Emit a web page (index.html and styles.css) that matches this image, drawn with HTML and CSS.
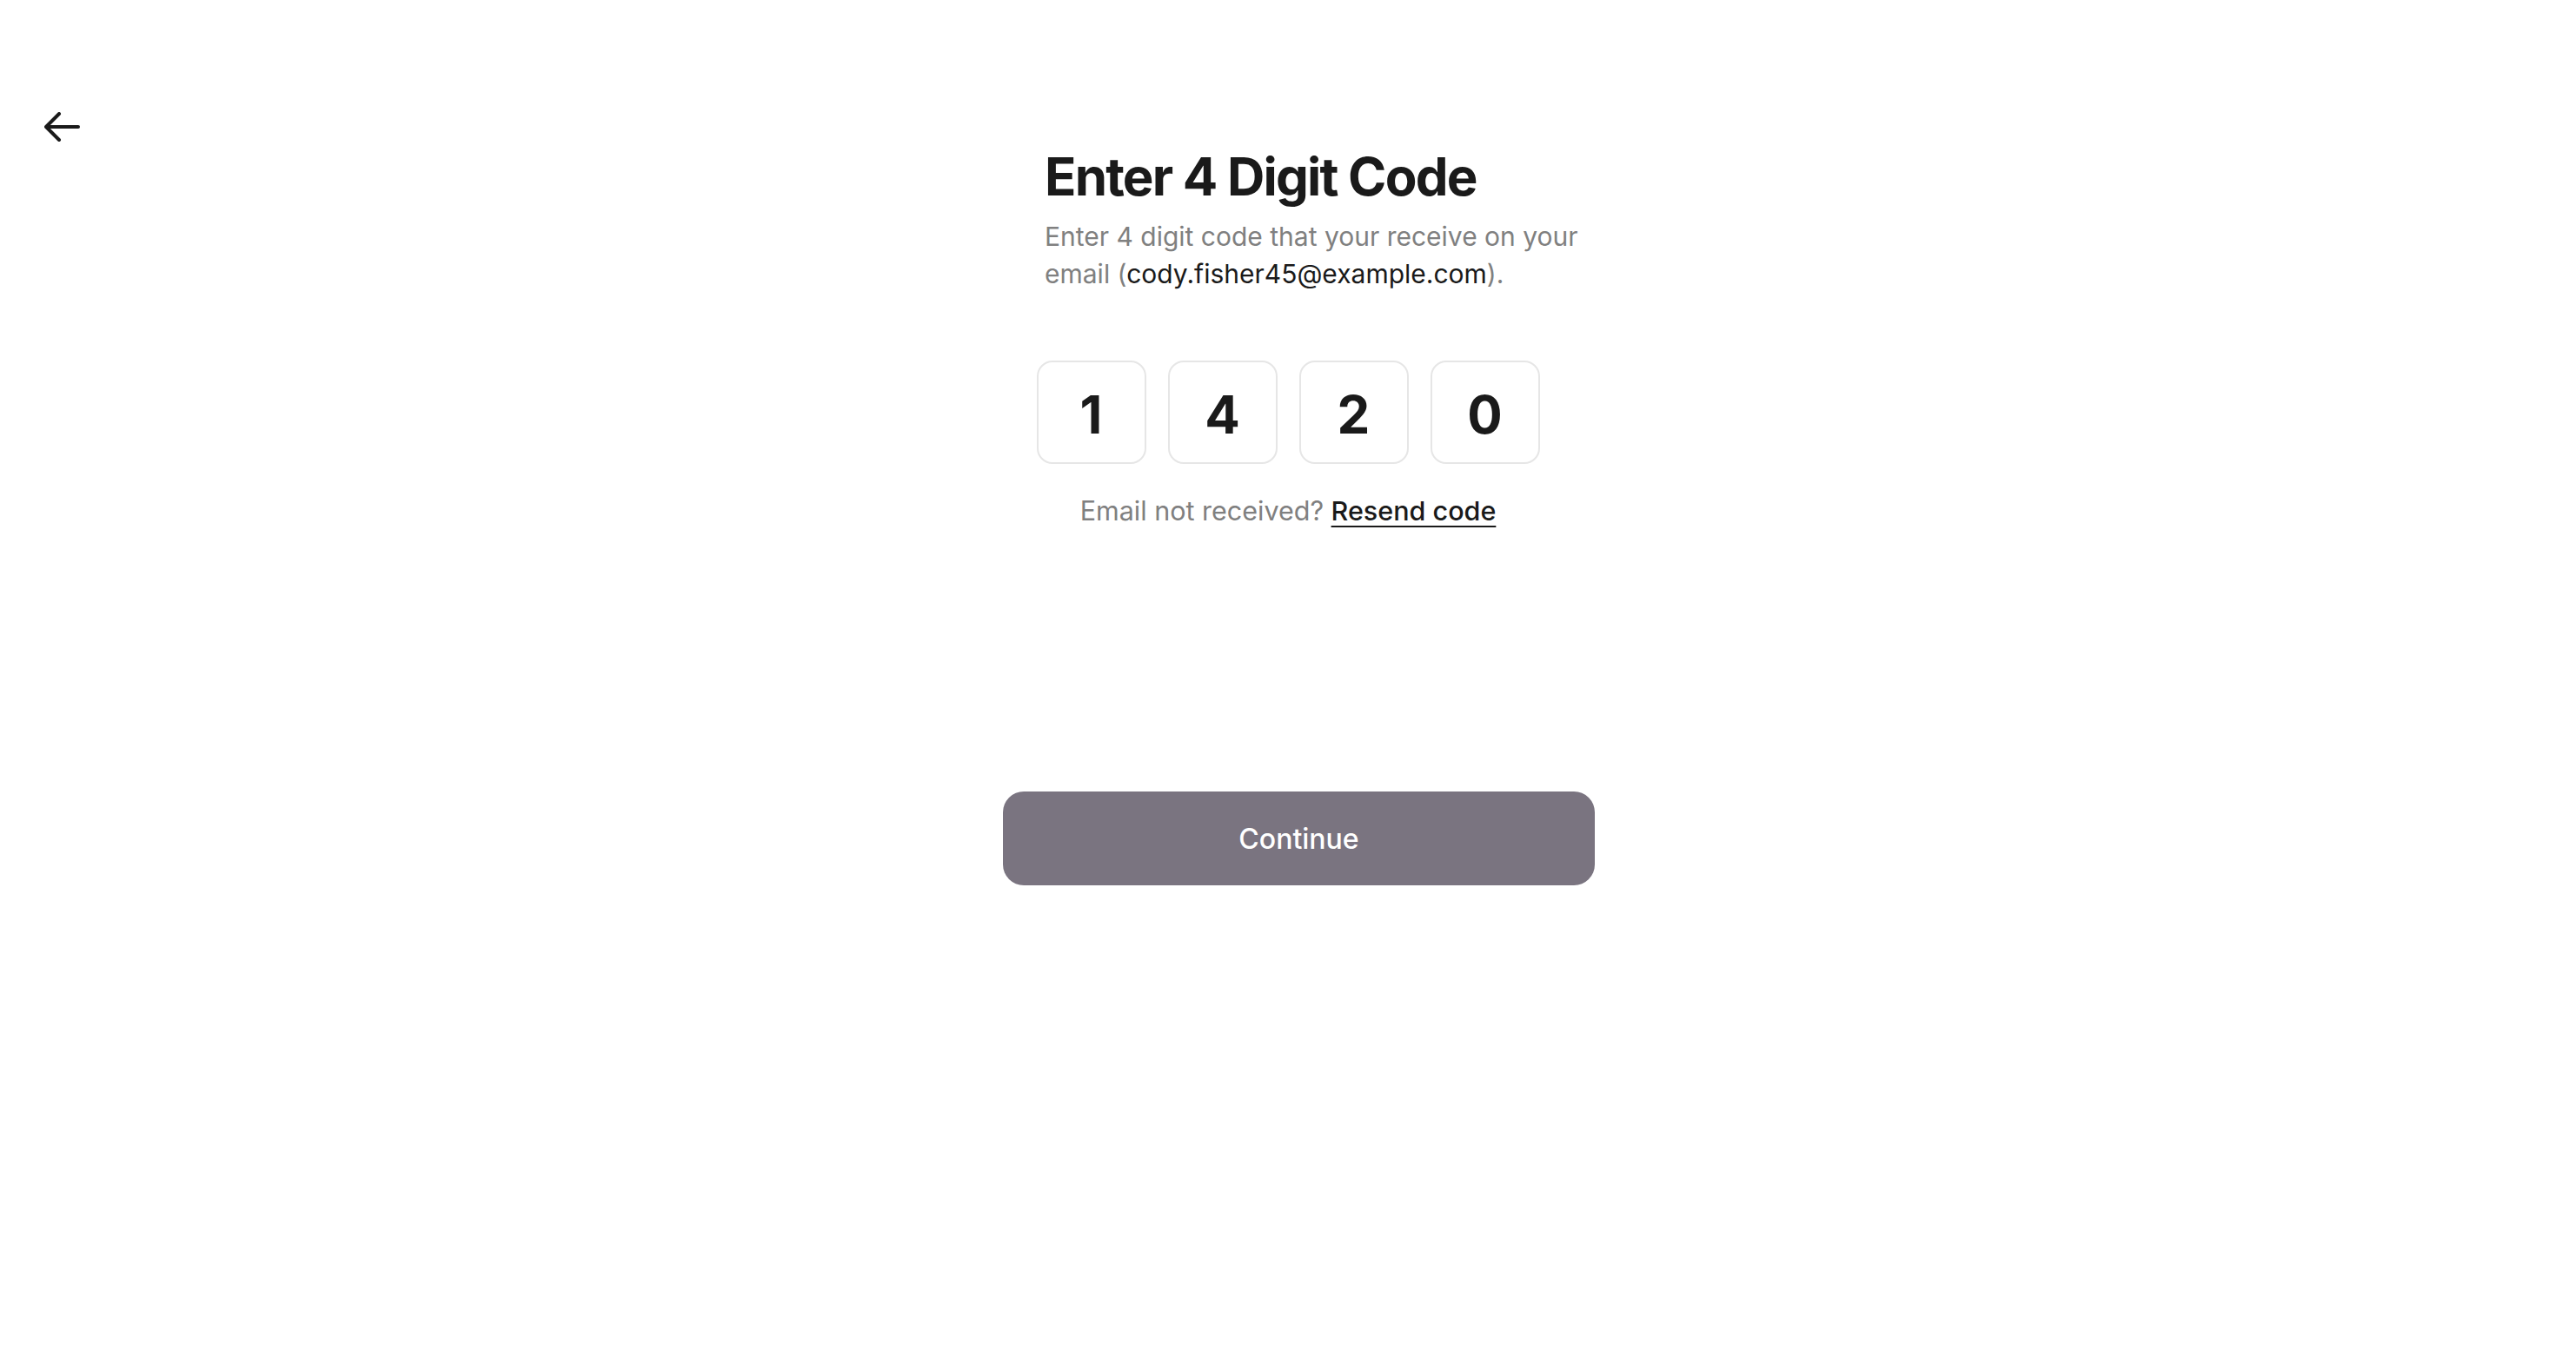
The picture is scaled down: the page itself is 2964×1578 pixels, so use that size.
FILE: index.html
```html
<!DOCTYPE html>
<html lang="en">
<head>
<meta charset="utf-8">
<title>Enter 4 Digit Code</title>
<link rel="stylesheet" href="styles.css">
</head>
<body>
<header class="topbar">
  <button class="back" aria-label="Back">
    <svg width="41" height="34" viewBox="0 0 41 34" fill="none" stroke="#1a1a1a" stroke-width="4" stroke-linecap="round" stroke-linejoin="round">
      <path d="M39 17H3"/>
      <path d="M17 2L2 17L17 32"/>
    </svg>
  </button>
</header>
<main class="verify">
  <div class="col">
    <div class="intro">
      <h1 class="title">Enter 4 Digit Code</h1>
      <p class="lead">Enter 4 digit code that your receive on your email (<span class="email">cody.fisher45@example.com</span>).</p>
    </div>
    <div class="otp">
      <div class="digit">1</div>
      <div class="digit">4</div>
      <div class="digit">2</div>
      <div class="digit">0</div>
    </div>
    <p class="resend">Email not received? <a class="resend-link" href="#">Resend code</a></p>
    <button class="continue">Continue</button>
  </div>
</main>
</body>
</html>
```

FILE: styles.css
```css
* { box-sizing: border-box; }
html, body { margin: 0; padding: 0; background: #ffffff; }
body {
  font-family: Inter, "Noto Sans", "Liberation Sans", sans-serif;
  color: #1a1a1a;
  width: 2964px;
  min-height: 1578px;
}
.topbar {
  padding: 129px 0 0 51px;
  height: 163px;
}
.back {
  display: block;
  padding: 0;
  margin: 0;
  border: 0;
  background: none;
  width: 41px;
  height: 34px;
  cursor: pointer;
}
.back svg { display: block; }
.verify {
  padding: 4px 0 0 25px;
}
.col {
  width: 681px;
  margin: 0 auto;
  display: flex;
  flex-direction: column;
}
.intro {
  padding-left: 48px;
}
.title {
  margin: 0;
  font-size: 60px;
  line-height: 72px;
  font-weight: 700;
  letter-spacing: -0.03em;
  color: #1a1a1a;
}
.lead {
  margin: 12px 0 0;
  max-width: 630px;
  font-size: 30px;
  line-height: 43px;
  font-weight: 400;
  letter-spacing: 0;
  color: #808080;
}
.email { color: #1a1a1a; }
.otp {
  margin-top: 78px;
  padding-right: 25px;
  display: flex;
  justify-content: center;
  gap: 25px;
}
.digit {
  width: 126px;
  height: 119px;
  padding-top: 4px;
  border: 2px solid #e6e6e6;
  border-radius: 18px;
  display: flex;
  align-items: center;
  justify-content: center;
  font-size: 60px;
  font-weight: 700;
  color: #1a1a1a;
}
.resend {
  margin: 32px 0 0;
  padding-right: 25px;
  text-align: center;
  font-size: 30.5px;
  line-height: 43px;
  letter-spacing: 0;
  color: #808080;
}
.resend-link {
  color: #1a1a1a;
  font-weight: 500;
  text-decoration: underline;
  text-decoration-thickness: 2px;
  text-underline-offset: 6px;
}
.continue {
  margin-top: 302px;
  width: 681px;
  height: 108px;
  border: 0;
  border-radius: 24px;
  background: #7a7480;
  color: #ffffff;
  font-family: Inter, "Noto Sans", "Liberation Sans", sans-serif;
  font-size: 32px;
  font-weight: 500;
  letter-spacing: 0;
  cursor: pointer;
}
```
